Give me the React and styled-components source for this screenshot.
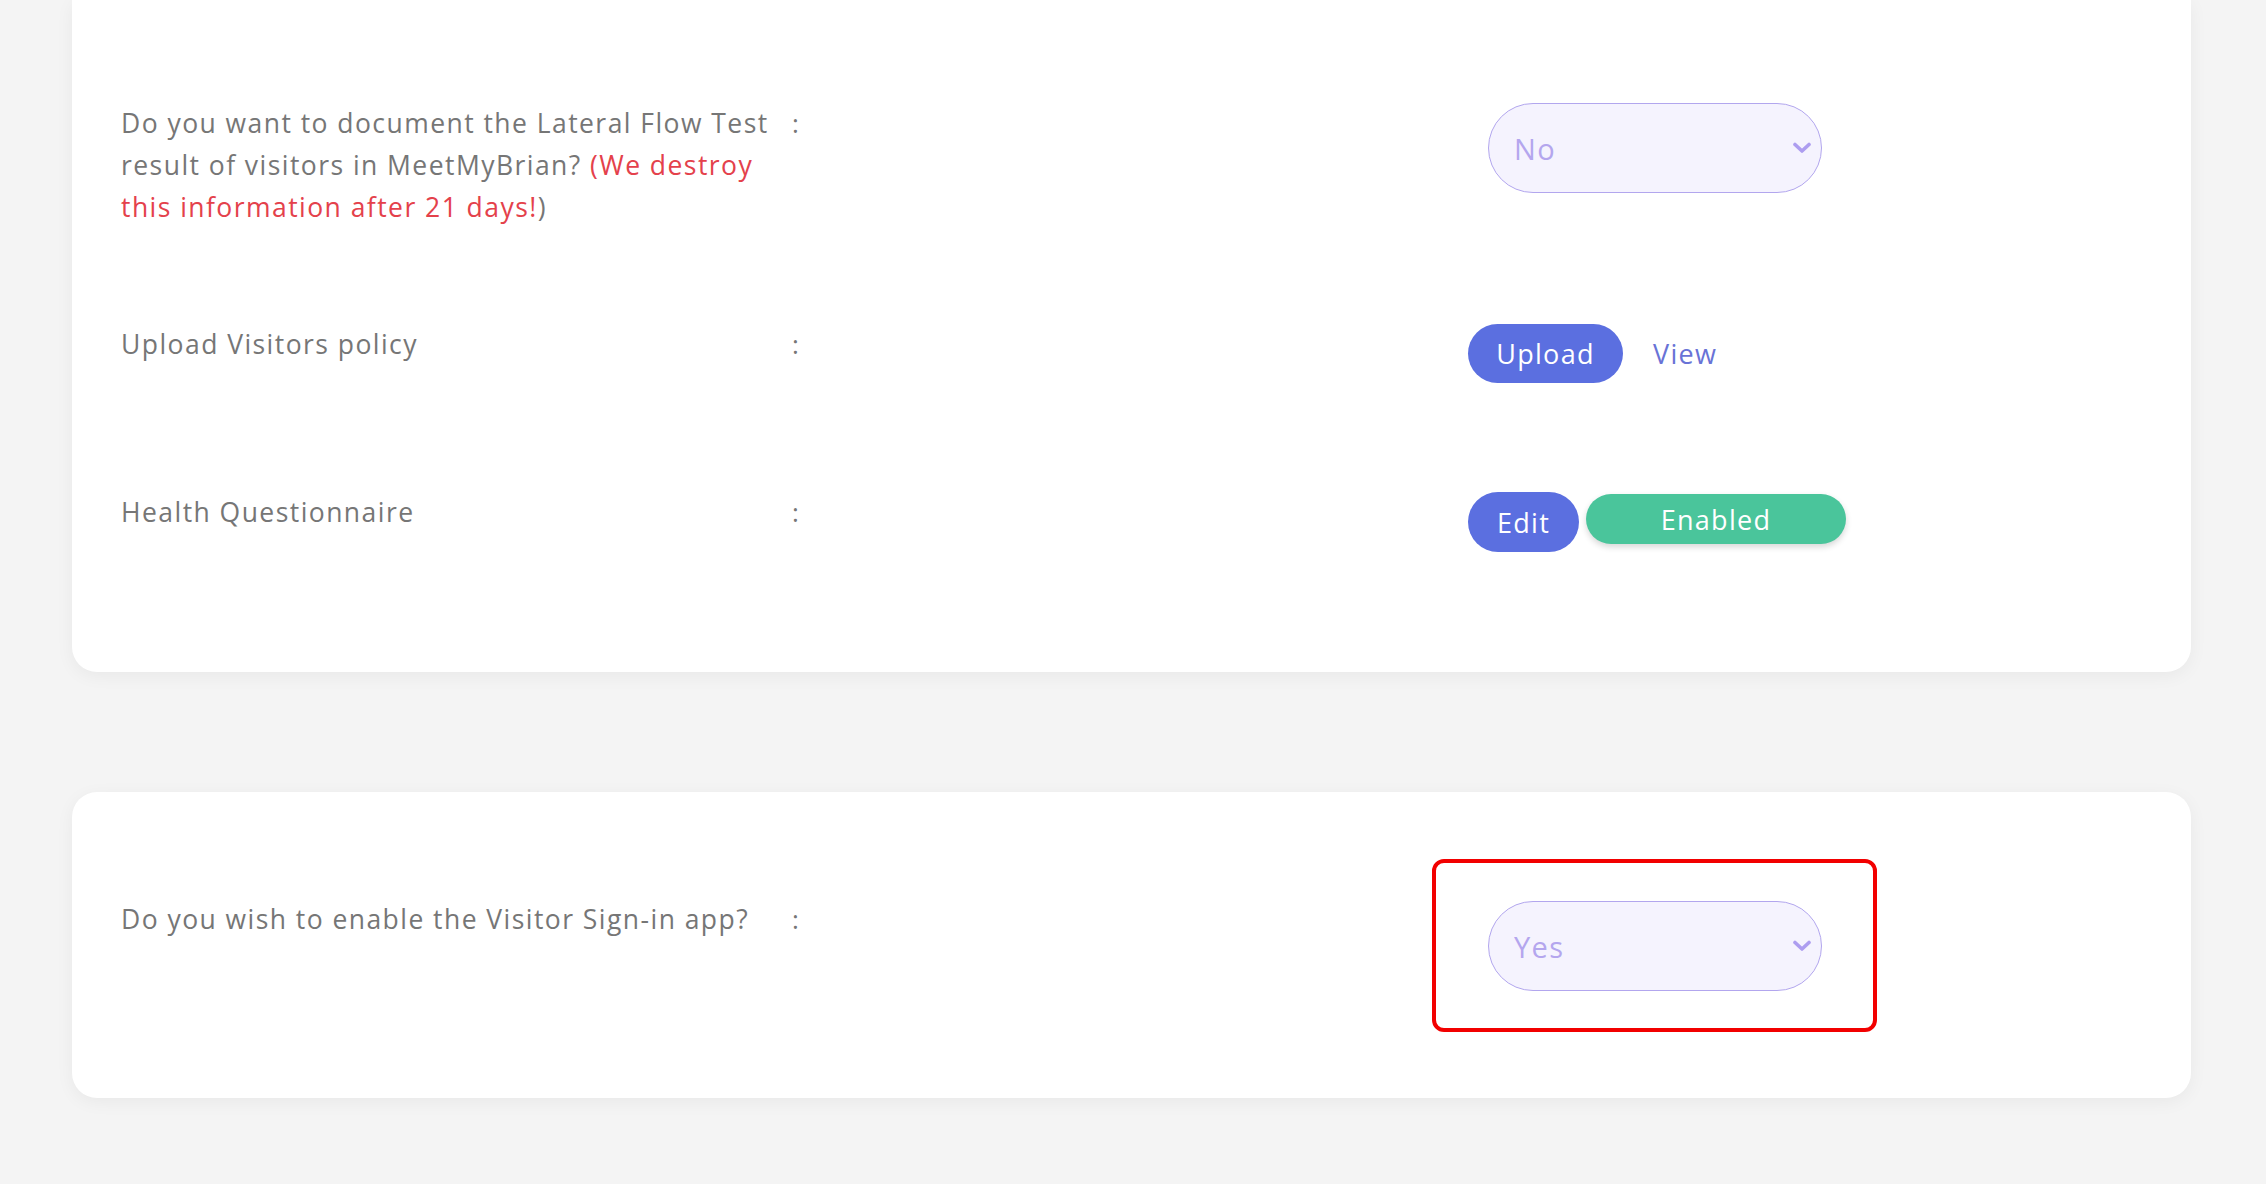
import React from 'react';
import styled, { createGlobalStyle } from 'styled-components';

const GlobalStyle = createGlobalStyle`
  html, body {
    margin: 0;
    padding: 0;
    background: #f4f4f4;
  }
  body {
    font-family: "Open Sans", "Noto Sans", sans-serif;
  }
`;

const Page = styled.div`
  padding: 0 75px 90px 72px;
`;

const Card = styled.section`
  background: #ffffff;
  border-radius: ${({ $flushTop }) => ($flushTop ? '0 0 25px 25px' : '25px')};
  box-shadow: 0 4px 18px rgba(0, 0, 0, 0.05);
  padding: ${({ $pad }) => $pad};
  margin-top: ${({ $gap }) => $gap || '0'};
`;

const Row = styled.div`
  display: grid;
  grid-template-columns: 671px 676px 1fr;
  align-items: start;
  min-height: ${({ $height }) => $height || 'auto'};
`;

const Label = styled.div`
  font-size: 26.5px;
  line-height: 42px;
  color: #767676;
  letter-spacing: 1.45px;
`;

const Warn = styled.span`
  color: #e4414b;
`;

const Colon = styled.div`
  font-size: 26px;
  line-height: 42px;
  color: #767676;
`;

const Controls = styled.div`
  display: flex;
  align-items: flex-start;
  gap: ${({ $gap }) => $gap || '0'};
  padding-top: ${({ $top }) => $top || '0'};
`;

const Highlight = styled.div`
  position: relative;
  margin-left: 20px;
`;

const Ring = styled.div`
  position: absolute;
  top: -42px;
  bottom: -41px;
  left: -56px;
  right: -55px;
  border: 4px solid #f20000;
  border-radius: 12px;
  pointer-events: none;
`;

const SelectShell = styled.div`
  display: flex;
  align-items: center;
  box-sizing: border-box;
  width: 334px;
  height: 90px;
  margin-left: ${({ $inset }) => ($inset ? '20px' : '0')};
  padding: 0 10px 0 25px;
  border: 1.5px solid #b2a6ee;
  border-radius: 45px;
  background: #f5f3fe;
  color: #b6a8ee;
`;

const Select = styled.select`
  flex: 1;
  appearance: none;
  -webkit-appearance: none;
  border: none;
  outline: none;
  background: transparent;
  font-family: "Open Sans", "Noto Sans", sans-serif;
  font-size: 29px;
  letter-spacing: 1.4px;
  color: #b4a6ee;
  padding: 0;
  margin: 0;
  cursor: pointer;
`;

const Chevron = styled.svg`
  width: 18px;
  height: 12px;
  flex: none;
`;

const PillButton = styled.button`
  box-sizing: border-box;
  height: ${({ $h }) => $h};
  width: ${({ $w }) => $w};
  margin-top: ${({ $mt }) => $mt || '0'};
  border: none;
  border-radius: 30px;
  background: ${({ $bg }) => $bg};
  box-shadow: ${({ $shadow }) => ($shadow ? '0 3px 6px rgba(0, 0, 0, 0.16)' : 'none')};
  color: #ffffff;
  font-family: "Open Sans", "Noto Sans", sans-serif;
  font-size: 27px;
  letter-spacing: 1.3px;
  padding: 0;
  cursor: pointer;
`;

const LinkButton = styled.a`
  font-size: 27px;
  line-height: 59px;
  color: #6973d6;
  letter-spacing: 1.3px;
  text-decoration: none;
  cursor: pointer;
`;

const ChevronDown = () => (
  <Chevron viewBox="0 0 18 12">
    <path d="M2 2.5 L9 9 L16 2.5" fill="none" stroke="#ad9df0" strokeWidth="3.6" strokeLinecap="round" strokeLinejoin="round" />
  </Chevron>
);

const YesNo = ({ value, inset }) => (
  <SelectShell $inset={inset}>
    <Select defaultValue={value}>
      <option value="Yes">Yes</option>
      <option value="No">No</option>
    </Select>
    <ChevronDown />
  </SelectShell>
);

export default function App () {
  return (
    <Page>
      <GlobalStyle />
      <Card $flushTop $pad="102px 49px 120px">
        <Row $height="221px">
          <Label>
            Do you want to document the Lateral Flow Test result of visitors in MeetMyBrian?{' '}
            <Warn>(We destroy this information after 21 days!</Warn>)
          </Label>
          <Colon>:</Colon>
          <Controls $top="1px">
            <YesNo value="No" inset />
          </Controls>
        </Row>
        <Row $height="168px">
          <Label>Upload Visitors policy</Label>
          <Colon>:</Colon>
          <Controls $gap="30px" $top="1px">
            <PillButton $bg="#5b6fe0" $w="155px" $h="59px">Upload</PillButton>
            <LinkButton>View</LinkButton>
          </Controls>
        </Row>
        <Row>
          <Label>Health Questionnaire</Label>
          <Colon>:</Colon>
          <Controls $gap="7px" $top="1px">
            <PillButton $bg="#5b6fe0" $w="111px" $h="60px">Edit</PillButton>
            <PillButton $bg="#4ac59b" $w="260px" $h="50px" $mt="2px" $shadow>Enabled</PillButton>
          </Controls>
        </Row>
      </Card>

      <Card $gap="120px" $pad="106px 49px 107px">
        <Row>
          <Label>Do you wish to enable the Visitor Sign-in app?</Label>
          <Colon>:</Colon>
          <Controls $top="3px">
            <Highlight>
              <YesNo value="Yes" />
              <Ring />
            </Highlight>
          </Controls>
        </Row>
      </Card>
    </Page>
  );
}
